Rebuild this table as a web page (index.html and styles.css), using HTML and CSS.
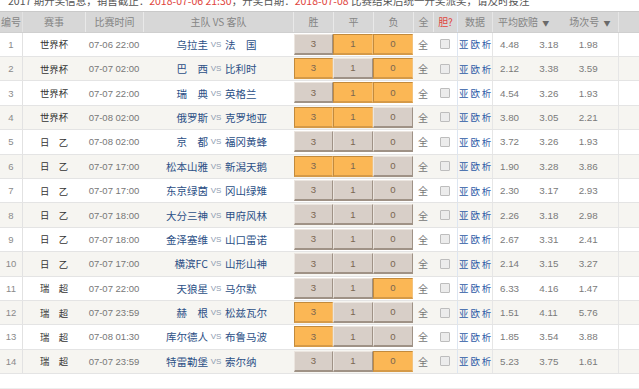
FILE: index.html
```html
<!DOCTYPE html>
<html lang="zh-CN">
<head>
<meta charset="utf-8">
<title>竞彩足球</title>
<link rel="stylesheet" href="styles.css">
</head>
<body>
<div class="notice"><p>2017 期开奖信息，销售截止：<span class="red">2018-07-06 21:30</span>，开奖日期：<span class="red">2018-07-08</span> 比赛结束后统一开奖派奖，请及时投注</p></div>
<div class="grid">
  <div class="row head">
    <div class="c">编号</div>
    <div class="c">赛事</div>
    <div class="c">比赛时间</div>
    <div class="c">主队 VS 客队</div>
    <div class="c">胜</div>
    <div class="c">平</div>
    <div class="c">负</div>
    <div class="c">全</div>
    <div class="c red">胆?</div>
    <div class="c">数据</div>
    <div class="c odds-head"><span>平均欧赔 <i>▼</i></span><span>场次号 <i>▼</i></span></div>
    <div class="c"></div>
  </div>

  <div class="row">
    <div class="c no">1</div><div class="c lg">世界杯</div><div class="c tm">07-06 22:00</div>
    <div class="c teams"><span class="home">乌拉圭</span><span class="vs">VS</span><span class="away">法　国</span></div>
    <div class="c b"><span class="btn">3</span></div><div class="c b"><span class="btn on">1</span></div><div class="c b"><span class="btn on">0</span></div>
    <div class="c all">全</div><div class="c ck"><span class="box"></span></div><div class="c links">亚欧析</div>
    <div class="c odds"><span>4.48</span><span>3.18</span><span>1.98</span></div><div class="c"></div>
  </div>
  <div class="row alt">
    <div class="c no">2</div><div class="c lg">世界杯</div><div class="c tm">07-07 02:00</div>
    <div class="c teams"><span class="home">巴　西</span><span class="vs">VS</span><span class="away">比利时</span></div>
    <div class="c b"><span class="btn on">3</span></div><div class="c b"><span class="btn">1</span></div><div class="c b"><span class="btn on">0</span></div>
    <div class="c all">全</div><div class="c ck"><span class="box"></span></div><div class="c links">亚欧析</div>
    <div class="c odds"><span>2.12</span><span>3.38</span><span>3.59</span></div><div class="c"></div>
  </div>
  <div class="row">
    <div class="c no">3</div><div class="c lg">世界杯</div><div class="c tm">07-07 22:00</div>
    <div class="c teams"><span class="home">瑞　典</span><span class="vs">VS</span><span class="away">英格兰</span></div>
    <div class="c b"><span class="btn">3</span></div><div class="c b"><span class="btn on">1</span></div><div class="c b"><span class="btn on">0</span></div>
    <div class="c all">全</div><div class="c ck"><span class="box"></span></div><div class="c links">亚欧析</div>
    <div class="c odds"><span>4.54</span><span>3.26</span><span>1.93</span></div><div class="c"></div>
  </div>
  <div class="row alt">
    <div class="c no">4</div><div class="c lg">世界杯</div><div class="c tm">07-08 02:00</div>
    <div class="c teams"><span class="home">俄罗斯</span><span class="vs">VS</span><span class="away">克罗地亚</span></div>
    <div class="c b"><span class="btn on">3</span></div><div class="c b"><span class="btn on">1</span></div><div class="c b"><span class="btn">0</span></div>
    <div class="c all">全</div><div class="c ck"><span class="box"></span></div><div class="c links">亚欧析</div>
    <div class="c odds"><span>3.80</span><span>3.05</span><span>2.21</span></div><div class="c"></div>
  </div>
  <div class="row">
    <div class="c no">5</div><div class="c lg">日　乙</div><div class="c tm">07-08 02:00</div>
    <div class="c teams"><span class="home">京　都</span><span class="vs">VS</span><span class="away">福冈黄蜂</span></div>
    <div class="c b"><span class="btn">3</span></div><div class="c b"><span class="btn">1</span></div><div class="c b"><span class="btn">0</span></div>
    <div class="c all">全</div><div class="c ck"><span class="box"></span></div><div class="c links">亚欧析</div>
    <div class="c odds"><span>3.72</span><span>3.26</span><span>1.93</span></div><div class="c"></div>
  </div>
  <div class="row alt">
    <div class="c no">6</div><div class="c lg">日　乙</div><div class="c tm">07-07 17:00</div>
    <div class="c teams"><span class="home">松本山雅</span><span class="vs">VS</span><span class="away">新潟天鹅</span></div>
    <div class="c b"><span class="btn on">3</span></div><div class="c b"><span class="btn on">1</span></div><div class="c b"><span class="btn">0</span></div>
    <div class="c all">全</div><div class="c ck"><span class="box"></span></div><div class="c links">亚欧析</div>
    <div class="c odds"><span>1.90</span><span>3.28</span><span>3.86</span></div><div class="c"></div>
  </div>
  <div class="row">
    <div class="c no">7</div><div class="c lg">日　乙</div><div class="c tm">07-07 17:00</div>
    <div class="c teams"><span class="home">东京绿茵</span><span class="vs">VS</span><span class="away">冈山绿雉</span></div>
    <div class="c b"><span class="btn">3</span></div><div class="c b"><span class="btn">1</span></div><div class="c b"><span class="btn">0</span></div>
    <div class="c all">全</div><div class="c ck"><span class="box"></span></div><div class="c links">亚欧析</div>
    <div class="c odds"><span>2.30</span><span>3.17</span><span>2.93</span></div><div class="c"></div>
  </div>
  <div class="row alt">
    <div class="c no">8</div><div class="c lg">日　乙</div><div class="c tm">07-07 18:00</div>
    <div class="c teams"><span class="home">大分三神</span><span class="vs">VS</span><span class="away">甲府风林</span></div>
    <div class="c b"><span class="btn">3</span></div><div class="c b"><span class="btn">1</span></div><div class="c b"><span class="btn">0</span></div>
    <div class="c all">全</div><div class="c ck"><span class="box"></span></div><div class="c links">亚欧析</div>
    <div class="c odds"><span>2.26</span><span>3.18</span><span>2.98</span></div><div class="c"></div>
  </div>
  <div class="row">
    <div class="c no">9</div><div class="c lg">日　乙</div><div class="c tm">07-07 18:00</div>
    <div class="c teams"><span class="home">金泽塞维</span><span class="vs">VS</span><span class="away">山口雷诺</span></div>
    <div class="c b"><span class="btn">3</span></div><div class="c b"><span class="btn">1</span></div><div class="c b"><span class="btn">0</span></div>
    <div class="c all">全</div><div class="c ck"><span class="box"></span></div><div class="c links">亚欧析</div>
    <div class="c odds"><span>2.67</span><span>3.31</span><span>2.41</span></div><div class="c"></div>
  </div>
  <div class="row alt">
    <div class="c no">10</div><div class="c lg">日　乙</div><div class="c tm">07-07 17:00</div>
    <div class="c teams"><span class="home">横滨FC</span><span class="vs">VS</span><span class="away">山形山神</span></div>
    <div class="c b"><span class="btn">3</span></div><div class="c b"><span class="btn">1</span></div><div class="c b"><span class="btn">0</span></div>
    <div class="c all">全</div><div class="c ck"><span class="box"></span></div><div class="c links">亚欧析</div>
    <div class="c odds"><span>2.14</span><span>3.15</span><span>3.27</span></div><div class="c"></div>
  </div>
  <div class="row">
    <div class="c no">11</div><div class="c lg">瑞　超</div><div class="c tm">07-07 22:00</div>
    <div class="c teams"><span class="home">天狼星</span><span class="vs">VS</span><span class="away">马尔默</span></div>
    <div class="c b"><span class="btn">3</span></div><div class="c b"><span class="btn">1</span></div><div class="c b"><span class="btn on">0</span></div>
    <div class="c all">全</div><div class="c ck"><span class="box"></span></div><div class="c links">亚欧析</div>
    <div class="c odds"><span>6.33</span><span>4.16</span><span>1.47</span></div><div class="c"></div>
  </div>
  <div class="row alt">
    <div class="c no">12</div><div class="c lg">瑞　超</div><div class="c tm">07-07 23:59</div>
    <div class="c teams"><span class="home">赫　根</span><span class="vs">VS</span><span class="away">松兹瓦尔</span></div>
    <div class="c b"><span class="btn on">3</span></div><div class="c b"><span class="btn">1</span></div><div class="c b"><span class="btn">0</span></div>
    <div class="c all">全</div><div class="c ck"><span class="box"></span></div><div class="c links">亚欧析</div>
    <div class="c odds"><span>1.51</span><span>4.11</span><span>5.76</span></div><div class="c"></div>
  </div>
  <div class="row">
    <div class="c no">13</div><div class="c lg">瑞　超</div><div class="c tm">07-08 01:30</div>
    <div class="c teams"><span class="home">库尔德人</span><span class="vs">VS</span><span class="away">布鲁马波</span></div>
    <div class="c b"><span class="btn on">3</span></div><div class="c b"><span class="btn">1</span></div><div class="c b"><span class="btn">0</span></div>
    <div class="c all">全</div><div class="c ck"><span class="box"></span></div><div class="c links">亚欧析</div>
    <div class="c odds"><span>1.85</span><span>3.54</span><span>3.88</span></div><div class="c"></div>
  </div>
  <div class="row alt">
    <div class="c no">14</div><div class="c lg">瑞　超</div><div class="c tm">07-07 23:59</div>
    <div class="c teams"><span class="home">特雷勒堡</span><span class="vs">VS</span><span class="away">索尔纳</span></div>
    <div class="c b"><span class="btn">3</span></div><div class="c b"><span class="btn">1</span></div><div class="c b"><span class="btn on">0</span></div>
    <div class="c all">全</div><div class="c ck"><span class="box"></span></div><div class="c links">亚欧析</div>
    <div class="c odds"><span>5.23</span><span>3.75</span><span>1.61</span></div><div class="c"></div>
  </div>
</div>
<div class="foot"></div>
</body>
</html>
```

FILE: styles.css
```css
html, body {
  margin: 0;
  padding: 0;
  background: #ffffff;
}
body {
  width: 639px;
  height: 389px;
  overflow: hidden;
  font-family: "Liberation Sans", "Noto Sans CJK SC", sans-serif;
  color: #666;
}
.red { color: #e0443c; }

.notice {
  height: 11px;
  overflow: hidden;
  padding-left: 8px;
}
.notice p {
  margin: -6px 0 0 0;
  font-size: 10.5px;
  line-height: 14px;
  color: #555;
  white-space: nowrap;
  font-family: "Noto Sans CJK SC", sans-serif;
}

.grid {
  display: flex;
  flex-direction: column;
}
.row {
  display: grid;
  grid-template-columns: 22px 63px 58px 150px 40px 40px 40px 20px 24px 35px 126px 1fr;
  height: 24.4px;
  box-sizing: border-box;
  border-bottom: 1px solid #e4e4e4;
  background: #ffffff;
}
.row.alt { background: #f6f5f1; }
.row.head {
  height: 21.6px;
  background: #d7d7d7;
  border-top: 1px solid #c9c9c9;
  border-bottom: 1px solid #cfcfcf;
}
.c {
  display: flex;
  align-items: center;
  justify-content: center;
  min-width: 0;
  white-space: nowrap;
  font-size: 9.6px;
}
.head .c {
  font-family: "Noto Sans CJK SC", sans-serif;
  font-size: 10px;
  color: #858585;
  border-left: 1px solid #e9e9e9;
}
.head .c:first-child { border-left: none; }
.head .c.red { color: #e0443c; }
.head .odds-head {
  justify-content: flex-start;
  padding-left: 5px;
  gap: 20px;
}
.head .odds-head i {
  font-style: normal;
  font-size: 7px;
  color: #6a6a6a;
  margin-left: 2px;
}

.row .c:nth-child(2) { border-left: 1px solid #e2e2e2; }
.row .c:nth-child(10) { border-left: 1px solid #dde6f2; }
.row .c:nth-child(11) { border-left: 1px solid #e6e6e6; }
.row .c:nth-child(12) { border-left: 1px solid #e6e6e6; }

.no { color: #8a8a8a; font-size: 9.5px; }
.lg {
  font-family: "Noto Sans CJK SC", sans-serif;
  font-size: 9.4px;
  color: #333;
}
.tm { color: #777; font-size: 9.5px; }

.teams {
  display: grid;
  grid-template-columns: 65px 16px 1fr;
  align-items: center;
}
.teams .home, .teams .away {
  font-family: "Noto Sans CJK SC", sans-serif;
  font-size: 10.5px;
  color: #2b4f86;
}
.teams .home { text-align: right; }
.teams .away { text-align: left; padding-left: 1px; }
.teams .vs {
  font-size: 8px;
  color: #8d9bb0;
  text-align: center;
}

.b {
  align-items: flex-start;
  padding-top: 1px;
}
.btn {
  box-sizing: border-box;
  width: 100%;
  height: 21px;
  display: flex;
  align-items: center;
  justify-content: center;
  background: #d8cfc8;
  border-top: 1px solid #ebe5df;
  border-left: 1px solid #ebe5df;
  border-right: 1px solid #9f9286;
  border-bottom: 2px solid #9f9286;
  color: #7a6651;
  font-size: 9.6px;
}
.btn.on {
  background: #fbb755;
  border-top: 1px solid #c28a3c;
  border-left: 1px solid #c28a3c;
  border-right: 1px solid #f3c27c;
  border-bottom: 2px solid #d59a48;
}
.b:nth-child(5) .btn { margin-left: 1px; }

.all {
  font-family: "Noto Sans CJK SC", sans-serif;
  font-size: 10px;
  color: #777;
}
.box {
  width: 8px;
  height: 8px;
  border: 1px solid #bdbdbd;
  border-radius: 1px;
  background: #ececec;
}
.links {
  font-family: "Noto Sans CJK SC", sans-serif;
  font-size: 9.4px;
  color: #2c5aa6;
  letter-spacing: 2px;
  justify-content: flex-start;
  padding-left: 1px;
}
.odds {
  justify-content: flex-start;
  padding-left: 7px;
  color: #7a7a7a;
  font-size: 9.8px;
}
.odds span { width: 46px; }

.foot {
  height: 14px;
  border-bottom: 1px solid #eeeeee;
}
```
